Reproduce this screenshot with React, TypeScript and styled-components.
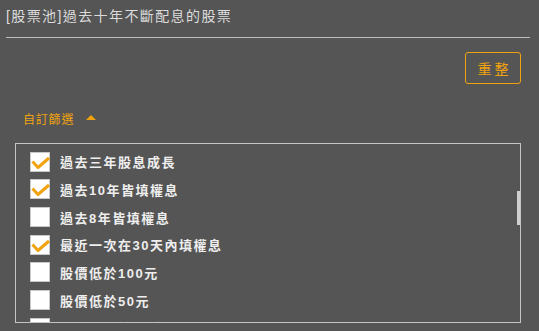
import React from "react";
import styled, { createGlobalStyle } from "styled-components";

const ORANGE = "#f0a30f";

const filters = [
  { label: "過去三年股息成長", checked: true },
  { label: "過去10年皆填權息", checked: true },
  { label: "過去8年皆填權息", checked: false },
  { label: "最近一次在30天內填權息", checked: true },
  { label: "股價低於100元", checked: false },
  { label: "股價低於50元", checked: false },
  { label: "本益比低於15倍", checked: false },
  { label: "殖利率大於5%", checked: false },
];

const App: React.FC<{}> = () => {
  return (
    <>
      <GlobalStyle />
      <Page>
        <Title>[股票池]過去十年不斷配息的股票</Title>
        <Divider />
        <Toolbar>
          <ResetButton type="button">重整</ResetButton>
        </Toolbar>
        <FilterToggle>
          <span>自訂篩選</span>
          <Caret />
        </FilterToggle>
        <ListBox>
          <List>
            {filters.map((f) => (
              <Row key={f.label}>
                <CheckBox>
                  {f.checked && (
                    <CheckMark viewBox="0 0 20 20">
                      <polyline points="2.5,9.5 8,15.5 19,6" />
                    </CheckMark>
                  )}
                </CheckBox>
                <Label>{f.label}</Label>
              </Row>
            ))}
          </List>
          <ScrollThumb />
        </ListBox>
      </Page>
    </>
  );
};

export default App;

const GlobalStyle = createGlobalStyle`
  html, body {
    margin: 0;
    padding: 0;
    background: #555555;
  }
  body {
    font-family: "Liberation Sans", "Noto Sans CJK TC", sans-serif;
  }
`;

const Page = styled.div`
  width: 539px;
  height: 331px;
  box-sizing: border-box;
  padding: 0 9px 0 6px;
  overflow: hidden;
`;

const Title = styled.div`
  margin-top: 6px;
  height: 20px;
  line-height: 20px;
  font-size: 14px;
  letter-spacing: 1.4px;
  color: #dcdcdc;
  white-space: nowrap;
`;

const Divider = styled.div`
  margin-top: 11px;
  height: 1px;
  background: #bdbdbd;
`;

const Toolbar = styled.div`
  display: flex;
  justify-content: flex-end;
  margin-top: 14px;
  padding-right: 9px;
`;

const ResetButton = styled.button`
  width: 56px;
  height: 32px;
  padding: 0;
  background: transparent;
  border: 1px solid ${ORANGE};
  border-radius: 3px;
  color: ${ORANGE};
  font-family: "Noto Sans CJK TC", sans-serif;
  font-size: 14px;
  letter-spacing: 3px;
  text-indent: 3px;
`;

const FilterToggle = styled.div`
  display: flex;
  align-items: center;
  gap: 12px;
  margin-top: 24px;
  padding-left: 17px;
  height: 20px;
  color: ${ORANGE};
  font-family: "Noto Sans CJK TC", sans-serif;
  font-size: 12px;
  letter-spacing: 0.8px;
`;

const Caret = styled.span`
  width: 0;
  height: 0;
  border-left: 5px solid transparent;
  border-right: 5px solid transparent;
  border-bottom: 5px solid ${ORANGE};
  margin-top: -1px;
`;

const ListBox = styled.div`
  position: relative;
  margin: 15px 0 0 9px;
  width: 506px;
  height: 180px;
  box-sizing: border-box;
  border: 1px solid #c4c4c4;
  overflow: hidden;
`;

const List = styled.div`
  display: flex;
  flex-direction: column;
  padding: 4px 0 0 14px;
`;

const Row = styled.div`
  display: flex;
  align-items: center;
  gap: 10px;
  height: 27.67px;
  flex-shrink: 0;
`;

const CheckBox = styled.div`
  position: relative;
  width: 20px;
  height: 20px;
  box-sizing: border-box;
  background: #ffffff;
  border: 1px solid #c8c8c8;
  flex-shrink: 0;
`;

const CheckMark = styled.svg`
  position: absolute;
  left: -1px;
  top: -1px;
  width: 20px;
  height: 20px;
  overflow: visible;
  fill: none;
  stroke: ${ORANGE};
  stroke-width: 3;
  stroke-linejoin: round;
`;

const Label = styled.span`
  font-size: 13px;
  font-weight: 700;
  letter-spacing: 1.5px;
  color: #eeeeee;
  white-space: nowrap;
`;

const ScrollThumb = styled.div`
  position: absolute;
  right: 0;
  top: 47px;
  width: 3px;
  height: 34px;
  background: #cfcfcf;
`;
